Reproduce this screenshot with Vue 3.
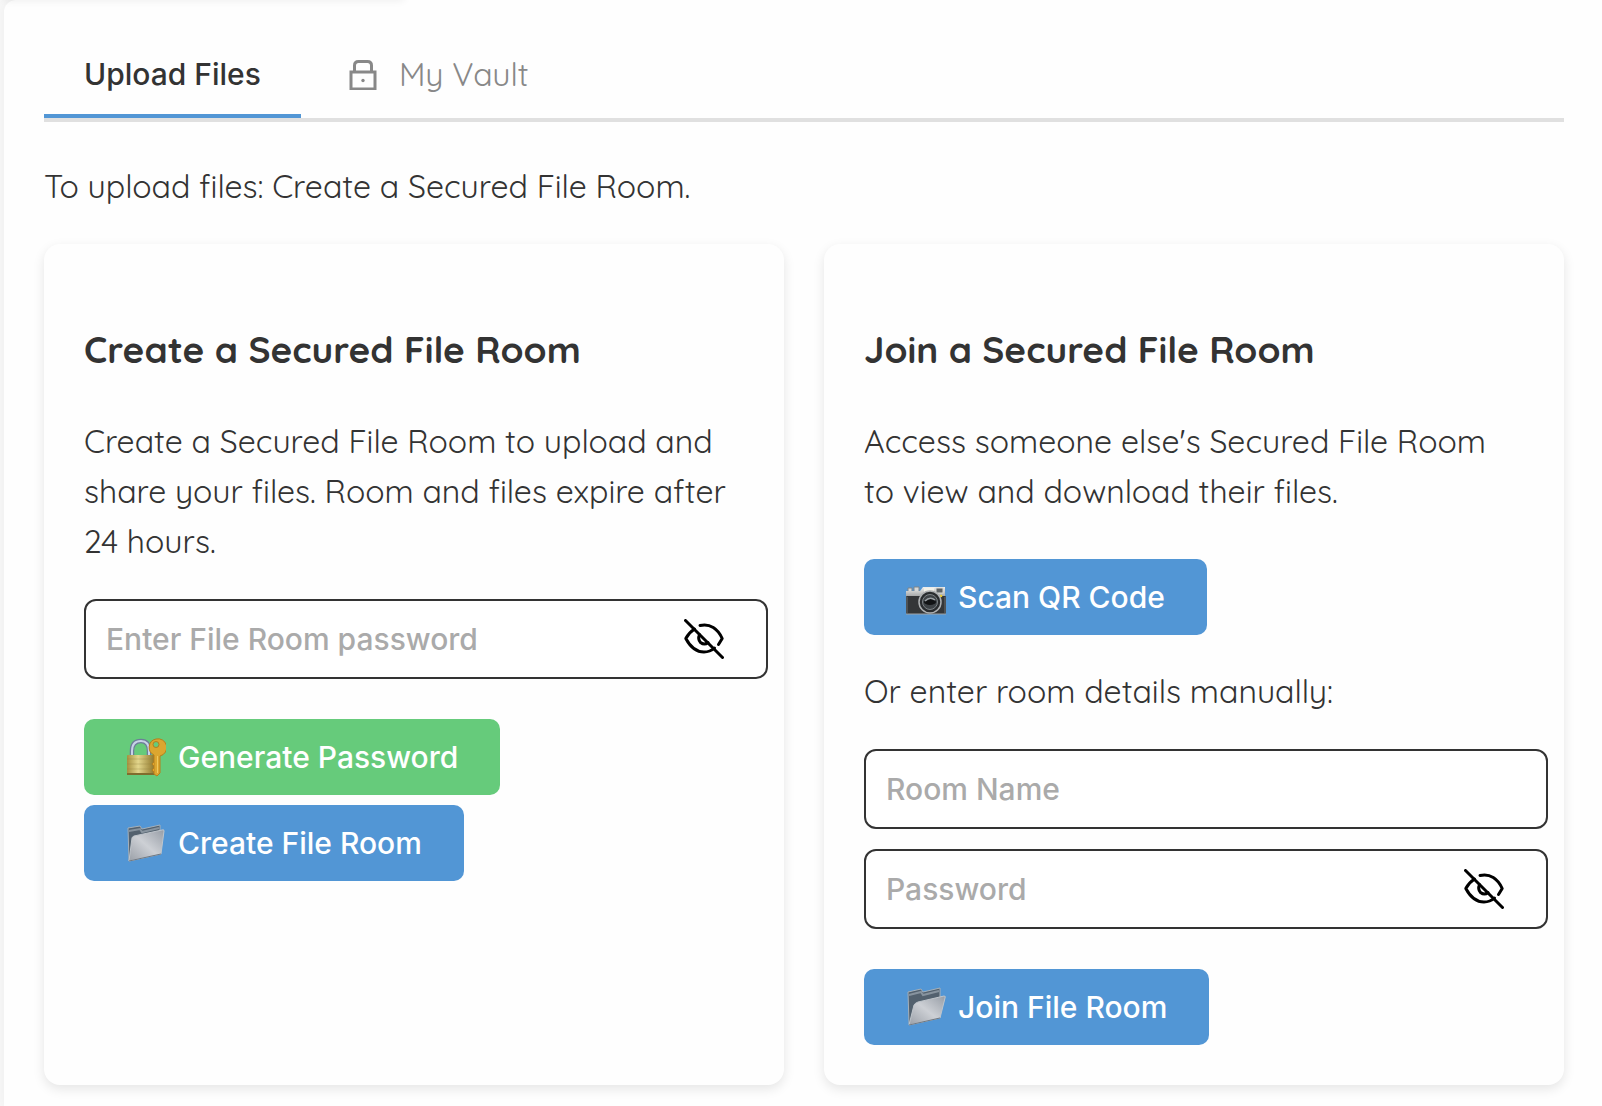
<script setup>
import { ref } from 'vue'

const activeTab = ref('upload')
const createPassword = ref('')
const showCreatePassword = ref(false)
const roomName = ref('')
const joinPassword = ref('')
const showJoinPassword = ref(false)

// random password for the room
function generatePassword() {
  const chars = 'abcdefghijkmnpqrstuvwxyzABCDEFGHJKLMNPQRSTUVWXYZ23456789'
  const bytes = crypto.getRandomValues(new Uint8Array(16))
  createPassword.value = Array.from(bytes, b => chars[b % chars.length]).join('')
}
</script>

<template>
  <main class="container">
    <nav class="tabs" role="tablist">
      <button
        type="button"
        role="tab"
        class="tab"
        :class="{ active: activeTab === 'upload' }"
        :aria-selected="activeTab === 'upload'"
        @click="activeTab = 'upload'"
      >Upload Files</button>
      <button
        type="button"
        role="tab"
        class="tab tab-vault"
        :class="{ active: activeTab === 'vault' }"
        :aria-selected="activeTab === 'vault'"
        @click="activeTab = 'vault'"
      >
        <svg class="lock" viewBox="0 0 28 32" aria-hidden="true">
          <path d="M5.5 13V7.5Q5.5 3.5 9.5 3.5H18.5Q22.5 3.5 22.5 7.5V13" />
          <rect x="2" y="14" width="24" height="17" />
          <circle cx="14" cy="22.5" r="1.7" />
        </svg>
        My Vault
      </button>
    </nav>

    <p class="intro">To upload files: Create a Secured File Room.</p>

    <div class="cards">
      <section class="card">
        <h3>Create a Secured File Room</h3>
        <p>Create a Secured File Room to upload and share your files. Room and files expire after 24 hours.</p>
        <div class="field">
          <input
            v-model="createPassword"
            :type="showCreatePassword ? 'text' : 'password'"
            placeholder="Enter File Room password"
            aria-label="Enter File Room password"
          />
          <button type="button" class="eye" aria-label="Show password" @click="showCreatePassword = !showCreatePassword">
            <svg viewBox="0 0 40 40" aria-hidden="true">
              <path d="M16 6.5C26 4 34 10 38.2 19.5L34.5 25.5" />
              <path d="M10.5 10Q5 13.5 1.8 19.5Q9 33 20 33Q26 33 30.5 29" />
              <path d="M15.5 15.5Q13.5 20 16.5 23.5Q20.5 26.5 24 23.5" />
              <path d="M1.5 1.5L38.5 38.5" />
            </svg>
          </button>
        </div>
        <div class="actions">
          <button type="button" class="btn green" @click="generatePassword">
            <svg viewBox="0 0 40 40" aria-hidden="true">
              <defs>
                <linearGradient id="brass" x1="0" x2="1" y1="0" y2="0">
                  <stop offset="0" stop-color="#a5903f" />
                  <stop offset="0.4" stop-color="#e3d68c" />
                  <stop offset="1" stop-color="#8d7428" />
                </linearGradient>
              </defs>
              <path d="M6 19V14Q6 4 15 4Q23 4 23 14V19" fill="none" stroke="#6d7d99" stroke-width="4.5" />
              <path d="M6 19V14Q6 4 15 4Q23 4 23 14V19" fill="none" stroke="#c8d3e8" stroke-width="2" />
              <rect x="1" y="18" width="28" height="20" rx="1" fill="url(#brass)" />
              <path d="M1 22H29M1 27H29M1 32H29" stroke="#8d7d3f" stroke-width="1" opacity="0.3" />
              <rect x="1" y="36" width="28" height="2" fill="#806d2d" />
              <path fill-rule="evenodd" fill="#dca62f" stroke="#b77e1d" d="M30 2A8.5 8.5 0 0 0 28 18V37L31 39L34 36V19A8.5 8.5 0 0 0 30 2ZM30 4.5A3 3 0 1 1 30 10.5A3 3 0 0 1 30 4.5Z" />
              <path d="M31.5 19V36" stroke="#f1c85d" stroke-width="1" />
              <path d="M28 25L26 27L28 29M28 31L26 33L28 35" fill="#dca62f" stroke="#b77e1d" />
            </svg>
            Generate Password
          </button>
          <button type="button" class="btn">
            <svg viewBox="0 0 40 40" aria-hidden="true">
              <defs>
                <linearGradient id="steel" x1="0" x2="1" y1="1" y2="0">
                  <stop offset="0" stop-color="#9a9fa7" />
                  <stop offset="0.5" stop-color="#cdd0d5" />
                  <stop offset="1" stop-color="#979da6" />
                </linearGradient>
              </defs>
              <path d="M2 5L14 3L16 6L34 2V30L3 38Z" fill="#53616e" stroke="#a5b0b9" />
              <path d="M3 8L14 6L16 9L33 5" fill="none" stroke="#87939e" stroke-width="2" />
              <path d="M6 15Q6 14 8 13L36 7Q38 6 38 8L35 31L3 38Z" fill="url(#steel)" stroke="#bfc5cb" />
              <path d="M3 38L35 31" stroke="#6f7882" stroke-width="1" />
            </svg>
            Create File Room
          </button>
        </div>
      </section>

      <section class="card">
        <h3>Join a Secured File Room</h3>
        <p>Access someone else's Secured File Room to view and download their files.</p>
        <button type="button" class="btn scan">
          <svg viewBox="0 0 40 40" aria-hidden="true">
            <defs>
              <linearGradient id="silver" x1="0" x2="0" y1="0" y2="1">
                <stop offset="0" stop-color="#eff0ef" />
                <stop offset="1" stop-color="#9fa1a2" />
              </linearGradient>
            </defs>
            <path d="M2 11H6V15H2ZM8 10H13V15H8Z" fill="#d5d7d8" stroke="#7f8588" />
            <path d="M0 14H14L17 10H39V20H0Z" fill="url(#silver)" />
            <rect x="0" y="19" width="40" height="18" rx="1" fill="#343638" />
            <path d="M1 20V36M39 20V36" stroke="#6b6e70" stroke-width="1" />
            <rect x="18" y="11" width="10" height="4" fill="#f2f1e8" />
            <rect x="30" y="11" width="7" height="5" fill="#5d6265" stroke="#d7d8d5" />
            <circle cx="35" cy="19" r="1.3" fill="#e7cb2e" />
            <circle cx="24" cy="25" r="11" fill="#292c2f" stroke="#aeb1b3" stroke-width="1.5" />
            <circle cx="24" cy="25" r="7.5" fill="#3e4347" stroke="#7c8286" />
            <ellipse cx="24" cy="25" rx="6" ry="3" fill="#111315" />
            <path d="M19 24Q24 19 29 23" fill="none" stroke="#9ba1a6" stroke-width="1.5" />
            <path d="M0 37H40" stroke="#a1a4a6" stroke-width="1" />
          </svg>
          Scan QR Code
        </button>
        <p class="manual">Or enter room details manually:</p>
        <div class="field">
          <input v-model="roomName" type="text" placeholder="Room Name" aria-label="Room Name" />
        </div>
        <div class="field">
          <input
            v-model="joinPassword"
            :type="showJoinPassword ? 'text' : 'password'"
            placeholder="Password"
            aria-label="Password"
          />
          <button type="button" class="eye" aria-label="Show password" @click="showJoinPassword = !showJoinPassword">
            <svg viewBox="0 0 40 40" aria-hidden="true">
              <path d="M16 6.5C26 4 34 10 38.2 19.5L34.5 25.5" />
              <path d="M10.5 10Q5 13.5 1.8 19.5Q9 33 20 33Q26 33 30.5 29" />
              <path d="M15.5 15.5Q13.5 20 16.5 23.5Q20.5 26.5 24 23.5" />
              <path d="M1.5 1.5L38.5 38.5" />
            </svg>
          </button>
        </div>
        <div class="actions">
          <button type="button" class="btn">
            <svg viewBox="0 0 40 40" aria-hidden="true">
              <path d="M2 5L15 2L17 5L34 1V28L3 37Z" fill="#53616e" stroke="#a5b0b9" />
              <path d="M3 8L15 5L17 8L33 4" fill="none" stroke="#87939e" stroke-width="2" />
              <path d="M8 18Q9 16 12 15L38 9Q40 9 39 11L34 31L3 38Z" fill="url(#steel)" stroke="#bfc5cb" />
              <path d="M3 38L34 31" stroke="#6f7882" stroke-width="1" />
            </svg>
            Join File Room
          </button>
        </div>
      </section>
    </div>
  </main>
</template>

<style>
body {
  margin: 0;
  background: #f7f7f7;
}
</style>

<style scoped>
.container {
  position: relative;
  box-sizing: border-box;
  min-height: 100vh;
  margin-left: 4px;
  padding: 32px 38px 20px 40px;
  background: #fefefe;
  border-top-left-radius: 12px;
  box-shadow: 0 0 12px rgba(0, 0, 0, 0.04);
  color: #333;
  font-family: Quicksand, Lato, sans-serif;
  font-size: 32px;
  line-height: 50px;
}

/* shadow cast by the panel above */
.container::before {
  content: '';
  position: absolute;
  top: -8px;
  left: 0;
  width: 400px;
  height: 8px;
  box-shadow: 0 0 8px rgba(0, 0, 0, 0.08);
}

.tabs {
  display: flex;
  border-bottom: 4px solid #e0e0e0;
}

.tab {
  display: flex;
  align-items: center;
  height: 86px;
  padding: 2px 40px 0;
  border: 0;
  border-bottom: 4px solid transparent;
  background: none;
  color: #888;
  font-family: inherit;
  font-size: 32px;
}

.tab.active {
  border-bottom-color: #5296d5;
  color: #333;
  font-family: Inter, sans-serif;
  font-size: 30px;
  font-weight: 500;
}

.tab-vault {
  gap: 22px;
  padding-left: 48px;
}

.lock {
  width: 28px;
  height: 32px;
  fill: none;
  stroke: #888;
  stroke-width: 3;
}

.lock circle {
  fill: #888;
  stroke: none;
}

p {
  margin: 0 0 33px;
}

.intro {
  margin-top: 39px;
}

.cards {
  display: grid;
  grid-template-columns: 1fr 1fr;
  gap: 40px;
}

.card {
  padding: 78px 40px 40px;
  border-radius: 16px;
  background: #fefefe;
  box-shadow: 0 4px 12px rgba(0, 0, 0, 0.1);
}

h3 {
  margin: 0 0 40px;
  font-size: 37px;
  line-height: 54px;
}

.field {
  display: flex;
  align-items: center;
  box-sizing: border-box;
  width: calc(100% + 24px);
  height: 80px;
  margin-bottom: 20px;
  padding: 0 42px 0 20px;
  border: 2px solid #333;
  border-radius: 12px;
  background: #fff;
}

.field input {
  flex: 1;
  min-width: 0;
  padding: 0;
  border: 0;
  outline: none;
  background: none;
  color: #333;
  font-family: Inter, sans-serif;
  font-size: 30px;
  font-weight: 500;
}

.field input::placeholder {
  color: #aaa;
  opacity: 1;
}

.eye {
  display: flex;
  padding: 0;
  border: 0;
  background: none;
}

.eye svg {
  width: 40px;
  height: 40px;
  fill: none;
  stroke: #000;
  stroke-width: 3;
  stroke-linecap: round;
  stroke-linejoin: round;
}

.actions {
  display: flex;
  flex-direction: column;
  align-items: flex-start;
  gap: 10px;
  margin-top: 40px;
}

.btn {
  display: flex;
  align-items: center;
  gap: 12px;
  height: 76px;
  padding: 0 42px;
  border: 0;
  border-radius: 10px;
  background: #5296d5;
  color: #fff;
  font-family: Inter, sans-serif;
  font-size: 30px;
  font-weight: 500;
}

.btn.green {
  background: #66cb7b;
}

.btn svg {
  width: 40px;
  height: 40px;
}

.scan {
  margin-top: 43px;
}

.manual {
  margin-top: 31px;
}

@media (max-width: 900px) {
  .cards { grid-template-columns: 1fr; }
  .field { width: 100%; }
}
</style>
